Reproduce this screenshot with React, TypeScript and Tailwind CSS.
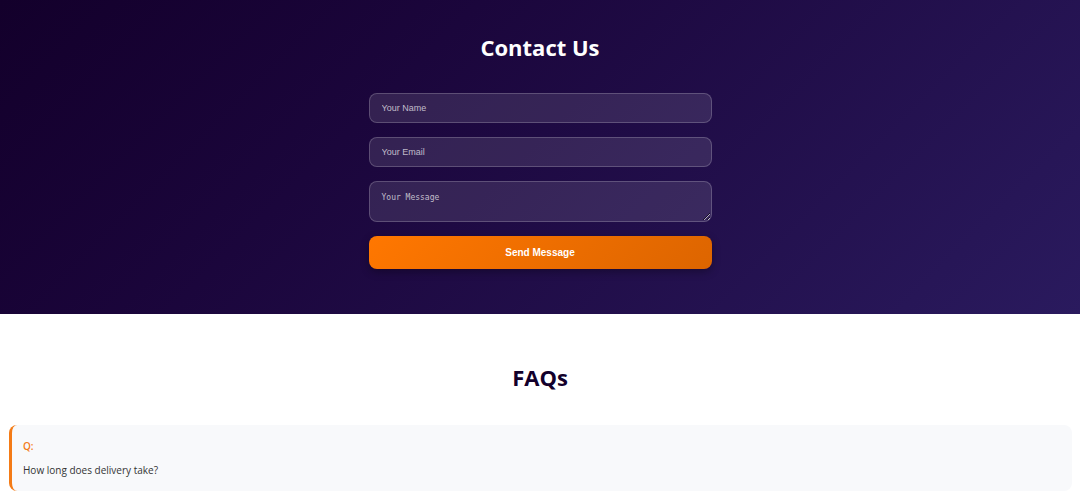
import React from "react";

const fieldClass =
  "block w-full rounded-lg border border-white/20 bg-white/11 px-3 text-white placeholder:text-white/70 placeholder:opacity-100 outline-none focus:border-[#ff7700]";

function ContactSection() {
  return (
    <section className="bg-linear-135 from-[#13002b] to-[#2a1a5e] px-4 pt-8 pb-[45px] text-white">
      <h2 className="text-center text-[22px] leading-[30px] font-bold">Contact Us</h2>
      <form
        className="mx-auto mt-[31px] flex w-full max-w-[343px] flex-col gap-3.5"
        onSubmit={(event) => event.preventDefault()}
      >
        <input
          type="text"
          aria-label="Your Name"
          placeholder="Your Name"
          className={`${fieldClass} h-[30px] font-['Liberation_Sans',Arial,sans-serif] text-[9px]`}
        />
        <input
          type="email"
          aria-label="Your Email"
          placeholder="Your Email"
          className={`${fieldClass} h-[30px] font-['Liberation_Sans',Arial,sans-serif] text-[9px]`}
        />
        <textarea
          aria-label="Your Message"
          placeholder="Your Message"
          className={`${fieldClass} h-[41px] resize-y overflow-auto py-2.5 font-['DejaVu_Sans_Mono',monospace] text-[8px] leading-3`}
        />
        <button
          type="submit"
          className="h-[33px] w-full cursor-pointer rounded-lg bg-linear-135 from-[#ff7700] to-[#dd6500] font-['Liberation_Sans',Arial,sans-serif] text-[10px] font-bold shadow-[0_3px_8px_rgba(0,0,0,0.3)]"
        >
          Send Message
        </button>
      </form>
    </section>
  );
}

function FaqSection() {
  return (
    <section className="bg-white px-2 pt-12 pb-2">
      <h2 className="text-center text-[22px] leading-[30px] font-bold text-[#13002b]">FAQs</h2>
      <article className="mt-[33px] ml-px rounded-lg border-l-3 border-[#f47b16] bg-[#f8f9fb] px-[11px] py-[13px]">
        <h3 className="text-[10px] leading-4 font-semibold text-[#f47b16]">Q:</h3>
        <p className="mt-2 text-[10px] leading-4 text-[#333333]">How long does delivery take?</p>
      </article>
    </section>
  );
}

export default function App() {
  return (
    <main className="min-h-screen bg-white font-['Open_Sans','Noto_Sans',sans-serif]">
      <ContactSection />
      <FaqSection />
    </main>
  );
}
